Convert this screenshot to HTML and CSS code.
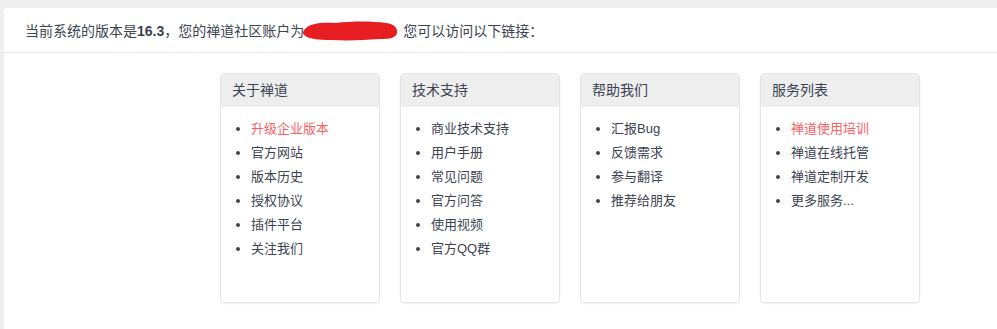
FILE: index.html
```html
<!DOCTYPE HTML>
<html>
<head>
    <title>禅道 - 链接</title>
    <link rel="stylesheet" href="styles.css">
</head>
<body>
<div class="panel">
    <div class="panel-heading">
        当前系统的版本是<strong>16.3</strong>，您的禅道社区账户为<span class="masked"><svg width="96" height="22" viewBox="0 0 96 22"><path d="M3 9 C8 3 20 2 34 3 C50 1 70 1 84 3 C92 4 96 8 95 13 C94 18 88 19 78 19 C62 20 46 21 30 20 C16 20 6 19 2 15 C0 13 1 11 3 9 Z" fill="#e61e22"/></svg></span> 您可以访问以下链接：
    </div>
    <div class="panel-body">
        <div class="link-card">
            <div class="card-title">关于禅道</div>
            <ul>
                <li><a href="#" class="hot">升级企业版本</a></li>
                <li><a href="#">官方网站</a></li>
                <li><a href="#">版本历史</a></li>
                <li><a href="#">授权协议</a></li>
                <li><a href="#">插件平台</a></li>
                <li><a href="#">关注我们</a></li>
            </ul>
        </div>
        <div class="link-card">
            <div class="card-title">技术支持</div>
            <ul>
                <li><a href="#">商业技术支持</a></li>
                <li><a href="#">用户手册</a></li>
                <li><a href="#">常见问题</a></li>
                <li><a href="#">官方问答</a></li>
                <li><a href="#">使用视频</a></li>
                <li><a href="#">官方QQ群</a></li>
            </ul>
        </div>
        <div class="link-card">
            <div class="card-title">帮助我们</div>
            <ul>
                <li><a href="#">汇报Bug</a></li>
                <li><a href="#">反馈需求</a></li>
                <li><a href="#">参与翻译</a></li>
                <li><a href="#">推荐给朋友</a></li>
            </ul>
        </div>
        <div class="link-card">
            <div class="card-title">服务列表</div>
            <ul>
                <li><a href="#" class="hot">禅道使用培训</a></li>
                <li><a href="#">禅道在线托管</a></li>
                <li><a href="#">禅道定制开发</a></li>
                <li><a href="#">更多服务...</a></li>
            </ul>
        </div>
    </div>
</div>
</body>
</html>
```

FILE: styles.css
```css
body {
    margin: 0;
    padding: 8px 0 0 4px;
    background-color: #efefef;
    font-family: "Liberation Sans", "Noto Sans CJK SC", sans-serif;
    color: #3c4353;
}

.panel {
    background-color: #fff;
    border-radius: 4px 0 0 0;
    min-height: 321px;
}

.panel-heading {
    height: 20px;
    line-height: 20px;
    padding: 12px 0 12px 21px;
    border-bottom: 1px solid #e5e5e5;
    font-size: 14px;
}

.panel-heading strong {
    font-weight: bold;
}

.masked {
    display: inline-block;
    height: 22px;
    margin: 0 1px 0 -2px;
    vertical-align: -6px;
}

.panel-body {
    display: flex;
    gap: 20px;
    padding: 20px 0 0 216px;
}

.link-card {
    width: 158px;
    height: 228px;
    border: 1px solid #e5e5e5;
    border-radius: 4px;
    box-shadow: 0 1px 2px rgba(0, 0, 0, 0.05);
    overflow: hidden;
}

.card-title {
    height: 33px;
    line-height: 33px;
    padding-left: 11px;
    background-color: #eeeeee;
    font-size: 14px;
    color: #3c4353;
}

.link-card ul {
    margin: 10px 0 0 0;
    padding-left: 30px;
    font-size: 13px;
}

.link-card li {
    line-height: 24px;
}

.link-card a {
    color: #3c4353;
    text-decoration: none;
}

.link-card a.hot {
    color: #f85f63;
}
```
